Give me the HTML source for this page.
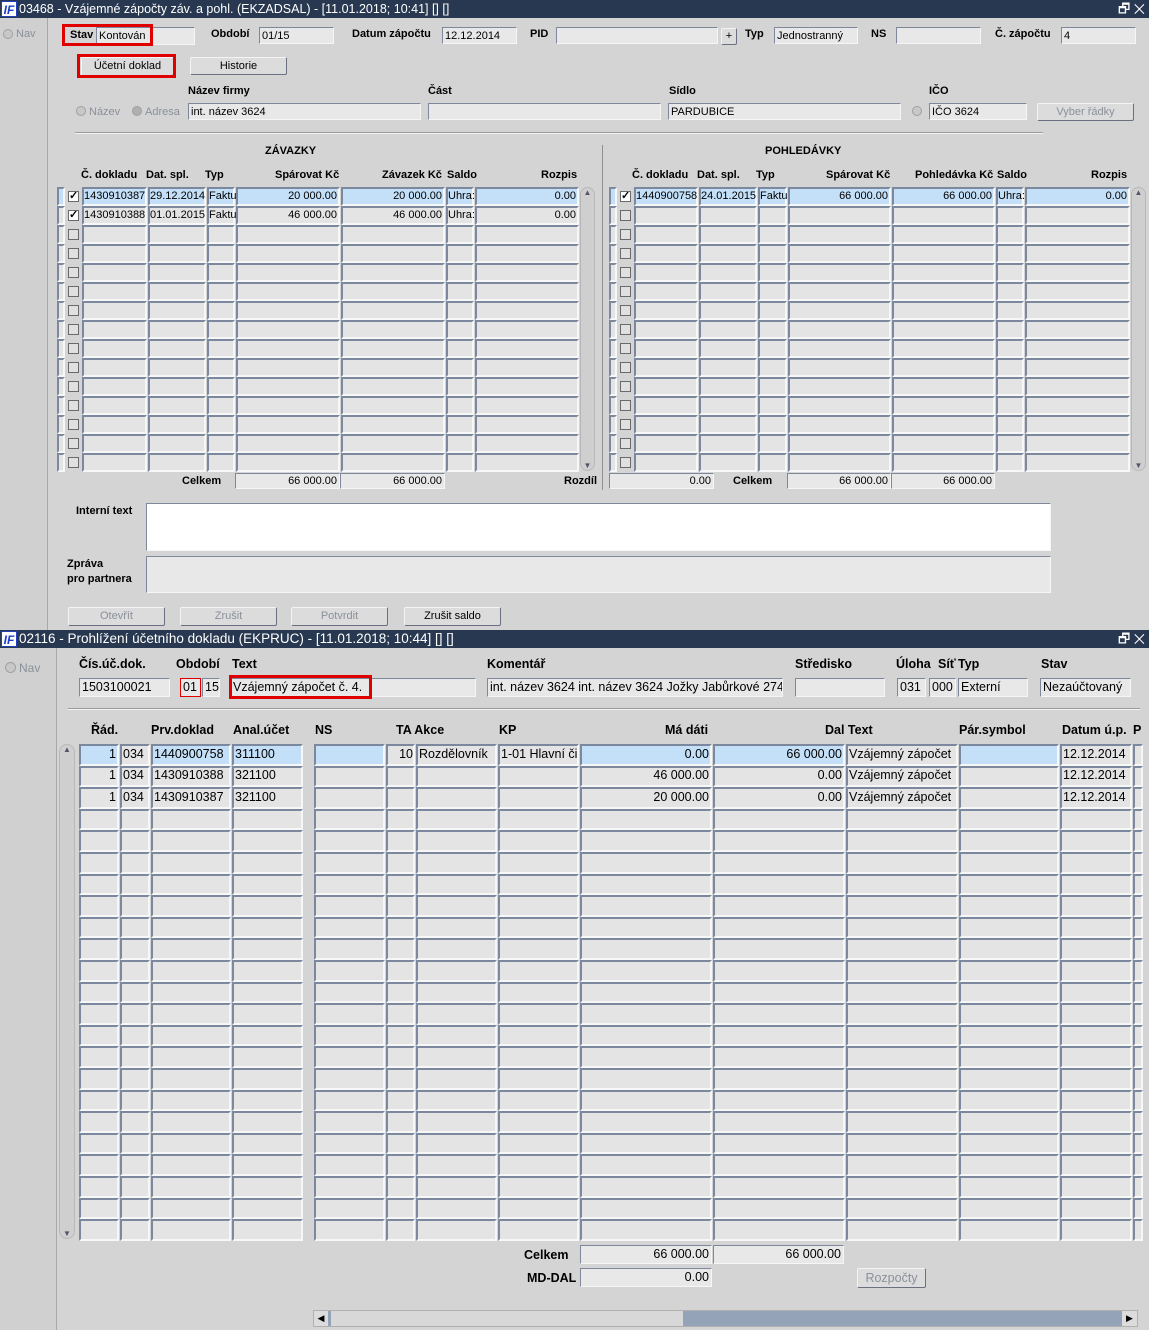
<!DOCTYPE html>
<html><head><meta charset="utf-8">
<style>
*{box-sizing:border-box;margin:0;padding:0}
body{width:1149px;height:1330px;background:#d4d4d4;font-family:"Liberation Sans",Arial,sans-serif;font-size:11px;color:#000;position:relative;overflow:hidden}
.a{position:absolute}
.tb{position:absolute;left:0;width:1149px;height:18px;background:#283850;color:#fff;font-size:12.5px;line-height:18px;padding-left:19px;white-space:nowrap}
.ic{position:absolute;left:1px;top:1px;width:16px;height:16px;background:#fff;color:#1a3cc8;font-weight:bold;font-style:italic;font-size:12px;line-height:16px;text-align:center;border:1px solid #2040c0}
.wc{position:absolute;right:4px;top:0;font-size:13px;color:#fff}
.f{position:absolute;background:#e8e8e8;border:1px solid;border-color:#7e889a #f6f6f6 #f6f6f6 #7e889a;padding:0 2px;white-space:nowrap;overflow:hidden}
.l{position:absolute;font-weight:bold;white-space:nowrap}
.b{position:absolute;background:#dcdcdc;border:1px solid;border-color:#f4f4f4 #6a7080 #6a7080 #f4f4f4;text-align:center;white-space:nowrap;border-radius:2px}
.dis{color:#8a909a}
.c{position:absolute;background:#e4e4e4;border:2px solid;border-color:#7b889d #f7f7f7 #f7f7f7 #7b889d;overflow:hidden;white-space:nowrap;padding:0 2px}
.hl{background:#c4e0f8}
.r{text-align:right}
.red{position:absolute;border:3px solid #e00000}
.sb{position:absolute;background:#cfcfcf;border:1px solid #b8b8b8;border-radius:8px}
.cb{position:absolute;width:11px;height:11px;background:#e0e0e0;border:1px solid #6a6a6a;font-size:11px;line-height:9px;text-align:center;font-weight:bold}
.rad{position:absolute;width:10px;height:10px;border-radius:50%;background:#c8c8c8;border:1px solid #a0a0a0}
</style></head><body>

<!-- ===== Form 1 ===== -->
<div class="tb" style="top:0"><div class="ic">IF</div>03468 - Vzájemné zápočty záv. a pohl. (EKZADSAL) - [11.01.2018; 10:41] [] []<span class="wc">🗗 ✕</span></div>
<div class="a" style="left:0;top:18px;width:48px;height:612px;background:#d0d0d0;border-right:1px solid #a8a8a8"></div>
<div class="rad" style="left:3px;top:29px"></div><div class="a dis" style="left:16px;top:28px">Nav</div>

<div class="l" style="left:70px;top:29px">Stav</div>
<div class="f" style="left:96px;top:27px;width:99px;height:18px;line-height:16px">Kontován</div>
<div class="red" style="left:62px;top:24px;width:91px;height:22px"></div>
<div class="l" style="left:211px;top:28px">Období</div>
<div class="f" style="left:259px;top:27px;width:75px;height:17px;line-height:16px">01/15</div>
<div class="l" style="left:352px;top:28px">Datum zápočtu</div>
<div class="f" style="left:442px;top:27px;width:75px;height:17px;line-height:16px">12.12.2014</div>
<div class="l" style="left:530px;top:28px">PID</div>
<div class="f" style="left:556px;top:27px;width:162px;height:17px"></div>
<div class="b" style="left:721px;top:28px;width:16px;height:17px;line-height:15px">+</div>
<div class="l" style="left:745px;top:28px">Typ</div>
<div class="f" style="left:774px;top:27px;width:84px;height:17px;line-height:16px">Jednostranný</div>
<div class="l" style="left:871px;top:28px">NS</div>
<div class="f" style="left:896px;top:27px;width:85px;height:17px"></div>
<div class="l" style="left:995px;top:28px">Č. zápočtu</div>
<div class="f" style="left:1061px;top:27px;width:75px;height:17px;line-height:16px">4</div>

<div class="b" style="left:81px;top:57px;width:93px;height:19px;line-height:17px">Účetní doklad</div>
<div class="red" style="left:77px;top:54px;width:99px;height:24px"></div>
<div class="b" style="left:190px;top:57px;width:97px;height:18px;line-height:16px">Historie</div>

<div class="l" style="left:188px;top:85px">Název firmy</div>
<div class="l" style="left:428px;top:85px">Část</div>
<div class="l" style="left:669px;top:85px">Sídlo</div>
<div class="l" style="left:929px;top:85px">IČO</div>
<div class="rad" style="left:76px;top:106px"></div><div class="a dis" style="left:89px;top:106px">Název</div>
<div class="rad" style="left:132px;top:106px;background:#b0b0b0"></div><div class="a dis" style="left:145px;top:106px">Adresa</div>
<div class="f" style="left:188px;top:103px;width:233px;height:17px;line-height:16px">int. název 3624</div>
<div class="f" style="left:428px;top:103px;width:233px;height:17px"></div>
<div class="f" style="left:668px;top:103px;width:233px;height:17px;line-height:16px">PARDUBICE</div>
<div class="rad" style="left:912px;top:106px"></div>
<div class="f" style="left:929px;top:103px;width:98px;height:17px;line-height:16px">IČO 3624</div>
<div class="b dis" style="left:1037px;top:103px;width:97px;height:18px;line-height:16px">Vyber řádky</div>

<div class="a" style="left:75px;top:132px;width:968px;height:2px;background:#9a9a9a;border-bottom:1px solid #f4f4f4"></div>
<div class="a" style="left:602px;top:145px;width:1px;height:345px;background:#909090"></div>

<div class="l" style="left:265px;top:145px">ZÁVAZKY</div>
<div class="l" style="left:765px;top:145px">POHLEDÁVKY</div>

<div class="l" style="left:81px;top:169px">Č. dokladu</div>
<div class="l" style="left:146px;top:169px">Dat. spl.</div>
<div class="l" style="left:205px;top:169px">Typ</div>
<div class="l" style="left:275px;top:169px">Spárovat Kč</div>
<div class="l" style="left:382px;top:169px">Závazek Kč</div>
<div class="l" style="left:447px;top:169px">Saldo</div>
<div class="l" style="left:541px;top:169px">Rozpis</div>

<div class="l" style="left:632px;top:169px">Č. dokladu</div>
<div class="l" style="left:697px;top:169px">Dat. spl.</div>
<div class="l" style="left:756px;top:169px">Typ</div>
<div class="l" style="left:826px;top:169px">Spárovat Kč</div>
<div class="l" style="left:915px;top:169px">Pohledávka Kč</div>
<div class="l" style="left:997px;top:169px">Saldo</div>
<div class="l" style="left:1091px;top:169px">Rozpis</div>

<div id="g1"></div>

<div class="a" style="left:84px;top:190px;line-height:13px">1430910387</div>
<div class="a" style="left:150px;top:190px">29.12.2014</div>
<div class="a" style="left:209px;top:190px">Faktu</div>
<div class="a r" style="left:236px;top:190px;width:101px">20 000.00</div>
<div class="a r" style="left:341px;top:190px;width:101px">20 000.00</div>
<div class="a" style="left:448px;top:190px">Uhra:</div>
<div class="a r" style="left:475px;top:190px;width:101px">0.00</div>
<div class="a" style="left:84px;top:209px">1430910388</div>
<div class="a" style="left:150px;top:209px">01.01.2015</div>
<div class="a" style="left:209px;top:209px">Faktu</div>
<div class="a r" style="left:236px;top:209px;width:101px">46 000.00</div>
<div class="a r" style="left:341px;top:209px;width:101px">46 000.00</div>
<div class="a" style="left:448px;top:209px">Uhra:</div>
<div class="a r" style="left:475px;top:209px;width:101px">0.00</div>
<div class="a" style="left:636px;top:190px">1440900758</div>
<div class="a" style="left:701px;top:190px">24.01.2015</div>
<div class="a" style="left:760px;top:190px">Faktu</div>
<div class="a r" style="left:788px;top:190px;width:100px">66 000.00</div>
<div class="a r" style="left:892px;top:190px;width:100px">66 000.00</div>
<div class="a" style="left:998px;top:190px">Uhra:</div>
<div class="a r" style="left:1025px;top:190px;width:102px">0.00</div>

<div class="l" style="left:182px;top:475px">Celkem</div>
<div class="f r" style="left:235px;top:473px;width:105px;height:16px;line-height:14px">66 000.00</div>
<div class="f r" style="left:340px;top:473px;width:105px;height:16px;line-height:14px">66 000.00</div>
<div class="l" style="left:564px;top:475px">Rozdíl</div>
<div class="f r" style="left:609px;top:473px;width:105px;height:16px;line-height:14px">0.00</div>
<div class="l" style="left:733px;top:475px">Celkem</div>
<div class="f r" style="left:787px;top:473px;width:104px;height:16px;line-height:14px">66 000.00</div>
<div class="f r" style="left:891px;top:473px;width:104px;height:16px;line-height:14px">66 000.00</div>

<div class="l" style="left:76px;top:505px">Interní text</div>
<div class="f" style="left:146px;top:503px;width:905px;height:48px;background:#fff"></div>
<div class="l" style="left:67px;top:557px;line-height:15px">Zpráva<br>pro partnera</div>
<div class="f" style="left:146px;top:556px;width:905px;height:37px"></div>

<div class="b dis" style="left:68px;top:607px;width:97px;height:19px;line-height:17px">Otevřít</div>
<div class="b dis" style="left:180px;top:607px;width:97px;height:19px;line-height:17px">Zrušit</div>
<div class="b dis" style="left:291px;top:607px;width:97px;height:19px;line-height:17px">Potvrdit</div>
<div class="b" style="left:404px;top:607px;width:97px;height:19px;line-height:17px">Zrušit saldo</div>

<!-- ===== Form 2 ===== -->
<div class="tb" style="top:630px;font-size:13.5px"><div class="ic">IF</div>02116 - Prohlížení účetního dokladu (EKPRUC) - [11.01.2018; 10:44] [] []<span class="wc">🗗 ✕</span></div>
<div class="a" style="left:0;top:648px;width:57px;height:682px;background:#d0d0d0;border-right:1px solid #a8a8a8"></div>
<div class="rad" style="left:5px;top:662px;width:11px;height:11px"></div><div class="a dis" style="left:19px;top:661px;font-size:12px">Nav</div>

<div style="font-size:12.5px">
<div class="l" style="left:79px;top:657px">Čís.úč.dok.</div>
<div class="l" style="left:176px;top:657px">Období</div>
<div class="l" style="left:232px;top:657px">Text</div>
<div class="l" style="left:487px;top:657px">Komentář</div>
<div class="l" style="left:795px;top:657px">Středisko</div>
<div class="l" style="left:896px;top:657px">Úloha</div>
<div class="l" style="left:938px;top:657px">Síť</div>
<div class="l" style="left:958px;top:657px">Typ</div>
<div class="l" style="left:1041px;top:657px">Stav</div>

<div class="f" style="left:79px;top:678px;width:91px;height:19px;line-height:17px">1503100021</div>
<div class="f" style="left:180px;top:678px;width:21px;height:19px;line-height:17px;border:1px solid #e00000">01</div>
<div class="f" style="left:202px;top:678px;width:18px;height:19px;line-height:17px">15</div>
<div class="f" style="left:230px;top:678px;width:246px;height:19px;line-height:17px">Vzájemný zápočet č. 4.</div>
<div class="red" style="left:229px;top:675px;width:143px;height:24px"></div>
<div class="f" style="left:487px;top:678px;width:296px;height:19px;line-height:17px">int. název 3624 int. název 3624 Jožky Jabůrkové 274</div>
<div class="f" style="left:795px;top:678px;width:90px;height:19px"></div>
<div class="f" style="left:897px;top:678px;width:29px;height:19px;line-height:17px">031</div>
<div class="f" style="left:929px;top:678px;width:27px;height:19px;line-height:17px">000</div>
<div class="f" style="left:958px;top:678px;width:70px;height:19px;line-height:17px">Externí</div>
<div class="f" style="left:1040px;top:678px;width:91px;height:19px;line-height:17px">Nezaúčtovaný</div>

<div class="a" style="left:68px;top:708px;width:1072px;height:2px;background:#9a9a9a;border-bottom:1px solid #f4f4f4"></div>

<div class="l" style="left:91px;top:723px">Řád.</div>
<div class="l" style="left:151px;top:723px">Prv.doklad</div>
<div class="l" style="left:233px;top:723px">Anal.účet</div>
<div class="l" style="left:315px;top:723px">NS</div>
<div class="l" style="left:396px;top:723px">TA Akce</div>
<div class="l" style="left:499px;top:723px">KP</div>
<div class="l" style="left:665px;top:723px">Má dáti</div>
<div class="l" style="left:825px;top:723px">Dal Text</div>
<div class="l" style="left:959px;top:723px">Pár.symbol</div>
<div class="l" style="left:1062px;top:723px">Datum ú.p.</div>
<div class="l" style="left:1133px;top:723px">P</div>

<div id="g2"></div>

<div id="d2">
<div class="a r" style="left:79px;top:747px;width:37px">1</div>
<div class="a" style="left:123px;top:747px">034</div>
<div class="a" style="left:154px;top:747px">1440900758</div>
<div class="a" style="left:235px;top:747px">311100</div>
<div class="a r" style="left:386px;top:747px;width:27px">10</div>
<div class="a" style="left:419px;top:747px">Rozdělovník</div>
<div class="a" style="left:501px;top:747px;width:76px;overflow:hidden;white-space:nowrap">1-01 Hlavní či</div>
<div class="a r" style="left:580px;top:747px;width:129px">0.00</div>
<div class="a r" style="left:713px;top:747px;width:129px">66 000.00</div>
<div class="a" style="left:849px;top:747px;width:106px;overflow:hidden;white-space:nowrap">Vzájemný zápočet</div>
<div class="a" style="left:1063px;top:747px">12.12.2014</div>

<div class="a r" style="left:79px;top:768px;width:37px">1</div>
<div class="a" style="left:123px;top:768px">034</div>
<div class="a" style="left:154px;top:768px">1430910388</div>
<div class="a" style="left:235px;top:768px">321100</div>
<div class="a r" style="left:580px;top:768px;width:129px">46 000.00</div>
<div class="a r" style="left:713px;top:768px;width:129px">0.00</div>
<div class="a" style="left:849px;top:768px;width:106px;overflow:hidden;white-space:nowrap">Vzájemný zápočet</div>
<div class="a" style="left:1063px;top:768px">12.12.2014</div>

<div class="a r" style="left:79px;top:790px;width:37px">1</div>
<div class="a" style="left:123px;top:790px">034</div>
<div class="a" style="left:154px;top:790px">1430910387</div>
<div class="a" style="left:235px;top:790px">321100</div>
<div class="a r" style="left:580px;top:790px;width:129px">20 000.00</div>
<div class="a r" style="left:713px;top:790px;width:129px">0.00</div>
<div class="a" style="left:849px;top:790px;width:106px;overflow:hidden;white-space:nowrap">Vzájemný zápočet</div>
<div class="a" style="left:1063px;top:790px">12.12.2014</div>
</div>

<div class="l" style="left:524px;top:1248px">Celkem</div>
<div class="f r" style="left:580px;top:1245px;width:132px;height:19px;line-height:17px">66 000.00</div>
<div class="f r" style="left:713px;top:1245px;width:131px;height:19px;line-height:17px">66 000.00</div>
<div class="l" style="left:527px;top:1271px">MD-DAL</div>
<div class="f r" style="left:580px;top:1268px;width:132px;height:19px;line-height:17px">0.00</div>
<div class="b dis" style="left:857px;top:1268px;width:69px;height:20px;line-height:18px">Rozpočty</div>
</div>

<div class="a" style="left:313px;top:1310px;width:825px;height:17px;background:#95a3b8;border:1px solid #b0b0b0"></div>
<div class="a" style="left:314px;top:1311px;width:14px;height:15px;background:#dcdcdc;font-size:9px;text-align:center;line-height:15px">◀</div>
<div class="a" style="left:331px;top:1311px;width:352px;height:15px;background:#d8d8d8"></div>
<div class="a" style="left:1122px;top:1311px;width:15px;height:15px;background:#dcdcdc;font-size:9px;text-align:center;line-height:15px">▶</div>

<script>
function cell(p,x,y,w,h,cls){var d=document.createElement('div');d.className='c'+(cls?' '+cls:'');d.style.left=x+'px';d.style.top=y+'px';d.style.width=w+'px';d.style.height=h+'px';p.appendChild(d);}
var g1=document.getElementById('g1');
var L=[[57,8],[82,65],[148,58],[207,28],[236,104],[341,104],[446,28],[475,104]];
var R=[[609,8],[634,64],[699,58],[758,29],[788,103],[892,103],[996,28],[1025,105]];
for(var i=0;i<15;i++){var y=187+i*19;
 [L,R].forEach(function(C,k){C.forEach(function(c,j){cell(g1,c[0],y,c[1],19,(i==0)?'hl':'');});
  var cb=document.createElement('div');cb.className='cb';cb.style.left=(k?620:68)+'px';cb.style.top=(y+4)+'px';
  if((k==0&&i<2)||(k==1&&i==0)){cb.textContent='✓';cb.style.background='#fff';}
  g1.appendChild(cb);});
}
var sbs=[[580,187],[1131,187]];
sbs.forEach(function(s){var d=document.createElement('div');d.className='sb';d.style.left=s[0]+'px';d.style.top=s[1]+'px';d.style.width='15px';d.style.height='284px';d.innerHTML='<div style="font-size:8px;text-align:center;color:#556">▲</div><div style="position:absolute;bottom:0;width:100%;font-size:8px;text-align:center;color:#556">▼</div>';g1.appendChild(d);});
var g2=document.getElementById('g2');
var C2=[[79,40],[120,30],[151,80],[232,71],[314,71],[386,29],[416,81],[498,81],[580,132],[713,132],[846,112],[959,100],[1060,72],[1133,10]];
for(var i=0;i<23;i++){var y=744+i*21.6;C2.forEach(function(c,j){cell(g2,c[0],Math.round(y),c[1],Math.round(y+21.6)-Math.round(y),(i==0&&j!=1&&j!=5&&j!=6&&j!=7&&j!=10&&j!=12&&j!=13)?'hl':'');});}
var s=document.createElement('div');s.className='sb';s.style.cssText='left:59px;top:744px;width:16px;height:495px';s.innerHTML='<div style="font-size:8px;text-align:center;color:#556">▲</div><div style="position:absolute;bottom:0;width:100%;font-size:8px;text-align:center;color:#556">▼</div>';g2.appendChild(s);
</script>
</body></html>
